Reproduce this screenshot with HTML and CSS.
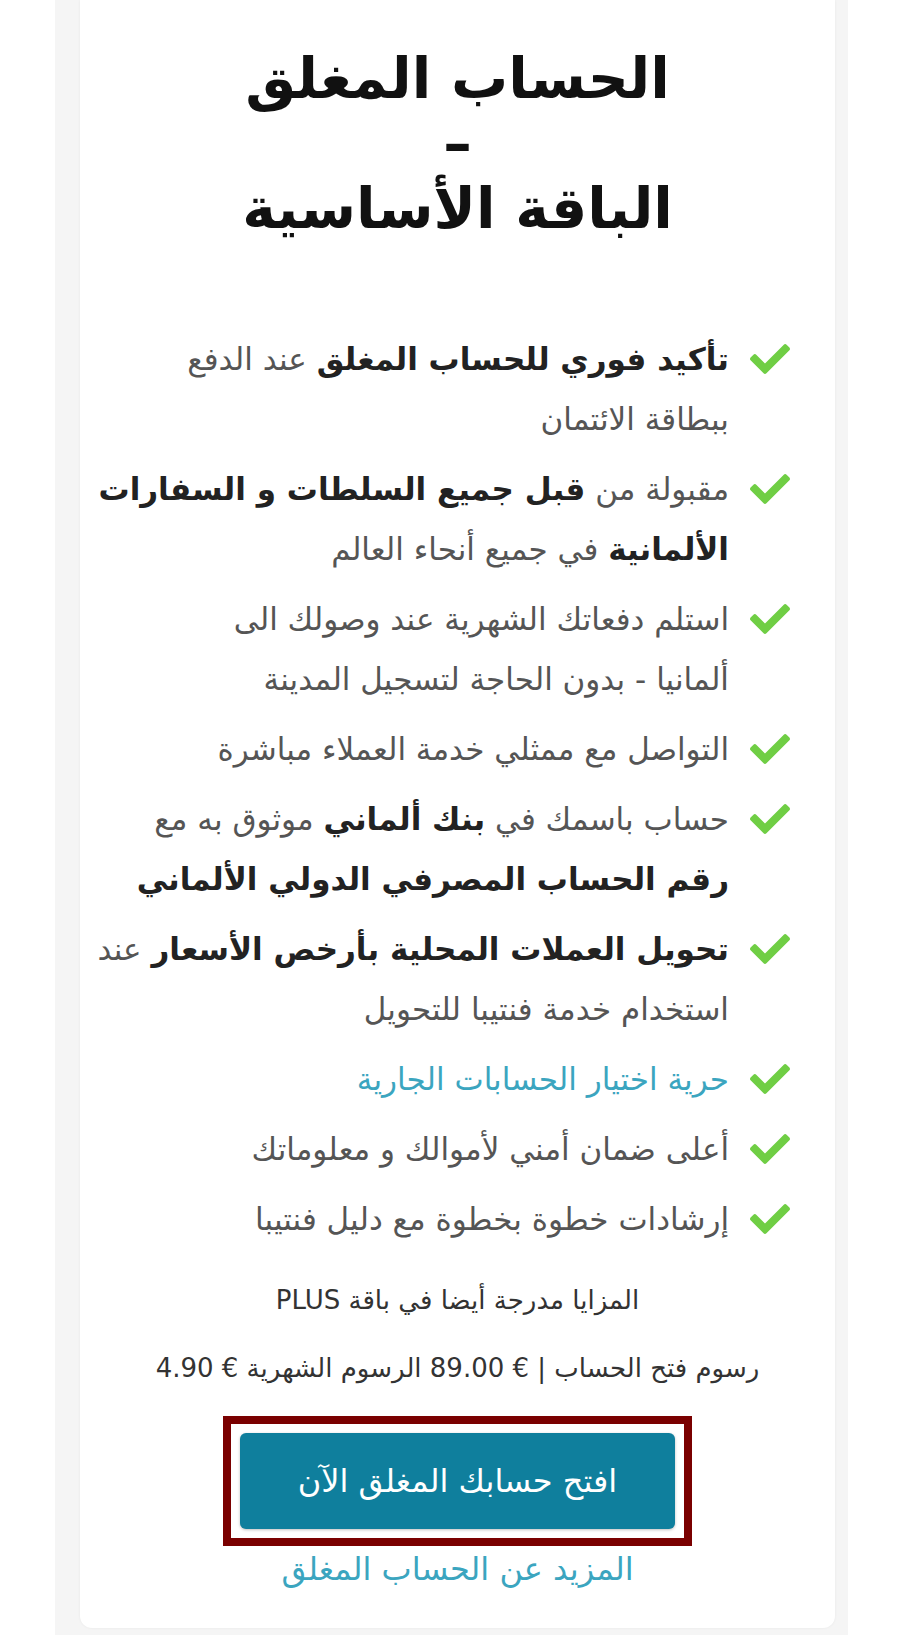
FILE: index.html
```html
<!DOCTYPE html>
<html lang="ar" dir="rtl">
<head>
    <meta charset="UTF-8">
    <meta name="viewport" content="width=device-width, initial-scale=1.0">
    <title>الحساب المغلق - الباقة الأساسية</title>
    <link rel="stylesheet" href="styles.css">
</head>
<body>
    <div class="paket-wrap">
        <div class="paket-card">
            <h1 class="paket-title">الحساب المغلق<br>–<br>الباقة الأساسية</h1>

            <ul class="fitur">
                <li>
                    <svg class="cek" viewBox="0 0 512 512"><path d="M173.9 439.4l-166.4-166.4c-10-10-10-26.2 0-36.2l36.2-36.2c10-10 26.2-10 36.2 0L192 312.7 432.1 72.6c10-10 26.2-10 36.2 0l36.2 36.2c10 10 10 26.2 0 36.2l-294.4 294.4c-10 10-26.2 10-36.2 0z"/></svg>
                    <span><b>تأكيد فوري للحساب المغلق</b> عند الدفع<br>ببطاقة الائتمان</span>
                </li>
                <li>
                    <svg class="cek" viewBox="0 0 512 512"><path d="M173.9 439.4l-166.4-166.4c-10-10-10-26.2 0-36.2l36.2-36.2c10-10 26.2-10 36.2 0L192 312.7 432.1 72.6c10-10 26.2-10 36.2 0l36.2 36.2c10 10 10 26.2 0 36.2l-294.4 294.4c-10 10-26.2 10-36.2 0z"/></svg>
                    <span>مقبولة من <b>قبل جميع السلطات و السفارات<br>الألمانية</b> في جميع أنحاء العالم</span>
                </li>
                <li>
                    <svg class="cek" viewBox="0 0 512 512"><path d="M173.9 439.4l-166.4-166.4c-10-10-10-26.2 0-36.2l36.2-36.2c10-10 26.2-10 36.2 0L192 312.7 432.1 72.6c10-10 26.2-10 36.2 0l36.2 36.2c10 10 10 26.2 0 36.2l-294.4 294.4c-10 10-26.2 10-36.2 0z"/></svg>
                    <span>استلم دفعاتك الشهرية عند وصولك الى<br>ألمانيا - بدون الحاجة لتسجيل المدينة</span>
                </li>
                <li>
                    <svg class="cek" viewBox="0 0 512 512"><path d="M173.9 439.4l-166.4-166.4c-10-10-10-26.2 0-36.2l36.2-36.2c10-10 26.2-10 36.2 0L192 312.7 432.1 72.6c10-10 26.2-10 36.2 0l36.2 36.2c10 10 10 26.2 0 36.2l-294.4 294.4c-10 10-26.2 10-36.2 0z"/></svg>
                    <span>التواصل مع ممثلي خدمة العملاء مباشرة</span>
                </li>
                <li>
                    <svg class="cek" viewBox="0 0 512 512"><path d="M173.9 439.4l-166.4-166.4c-10-10-10-26.2 0-36.2l36.2-36.2c10-10 26.2-10 36.2 0L192 312.7 432.1 72.6c10-10 26.2-10 36.2 0l36.2 36.2c10 10 10 26.2 0 36.2l-294.4 294.4c-10 10-26.2 10-36.2 0z"/></svg>
                    <span>حساب باسمك في <b>بنك ألماني</b> موثوق به مع<br><b>رقم الحساب المصرفي الدولي الألماني</b></span>
                </li>
                <li>
                    <svg class="cek" viewBox="0 0 512 512"><path d="M173.9 439.4l-166.4-166.4c-10-10-10-26.2 0-36.2l36.2-36.2c10-10 26.2-10 36.2 0L192 312.7 432.1 72.6c10-10 26.2-10 36.2 0l36.2 36.2c10 10 10 26.2 0 36.2l-294.4 294.4c-10 10-26.2 10-36.2 0z"/></svg>
                    <span><b>تحويل العملات المحلية بأرخص الأسعار</b> عند<br>استخدام خدمة فنتيبا للتحويل</span>
                </li>
                <li>
                    <svg class="cek" viewBox="0 0 512 512"><path d="M173.9 439.4l-166.4-166.4c-10-10-10-26.2 0-36.2l36.2-36.2c10-10 26.2-10 36.2 0L192 312.7 432.1 72.6c10-10 26.2-10 36.2 0l36.2 36.2c10 10 10 26.2 0 36.2l-294.4 294.4c-10 10-26.2 10-36.2 0z"/></svg>
                    <a href="#" class="link">حرية اختيار الحسابات الجارية</a>
                </li>
                <li>
                    <svg class="cek" viewBox="0 0 512 512"><path d="M173.9 439.4l-166.4-166.4c-10-10-10-26.2 0-36.2l36.2-36.2c10-10 26.2-10 36.2 0L192 312.7 432.1 72.6c10-10 26.2-10 36.2 0l36.2 36.2c10 10 10 26.2 0 36.2l-294.4 294.4c-10 10-26.2 10-36.2 0z"/></svg>
                    <span>أعلى ضمان أمني لأموالك و معلوماتك</span>
                </li>
                <li>
                    <svg class="cek" viewBox="0 0 512 512"><path d="M173.9 439.4l-166.4-166.4c-10-10-10-26.2 0-36.2l36.2-36.2c10-10 26.2-10 36.2 0L192 312.7 432.1 72.6c10-10 26.2-10 36.2 0l36.2 36.2c10 10 10 26.2 0 36.2l-294.4 294.4c-10 10-26.2 10-36.2 0z"/></svg>
                    <span>إرشادات خطوة بخطوة مع دليل فنتيبا</span>
                </li>
            </ul>

            <p class="catatan">المزايا مدرجة أيضا في باقة PLUS</p>
            <p class="harga">رسوم فتح الحساب | € 89.00 الرسوم الشهرية € 4.90</p>

            <div class="tombol-bingkai">
                <a href="#" class="tombol">افتح حسابك المغلق الآن</a>
            </div>
            <a href="#" class="link link-bawah">المزيد عن الحساب المغلق</a>
        </div>
    </div>
</body>
</html>
```

FILE: styles.css
```css
body {
    margin: 0;
    background: #fff;
    font-family: 'DejaVu Sans', 'Noto Sans', sans-serif;
    color: #555;
}
.paket-wrap {
    margin: 0 52px 0 55px;
    padding: 0 13px 7px 25px;
    background: #f5f5f5;
}
.paket-card {
    background: #fff;
    border-radius: 0 0 12px 12px;
    box-shadow: 0 0 3px rgba(0, 0, 0, 0.06);
    padding: 46px 0 39px;
    text-align: center;
}
.paket-title {
    margin: 0;
    color: #111;
    font-size: 57px;
    line-height: 65px;
    font-weight: bold;
}
.fitur {
    list-style: none;
    margin: 88px 0 0;
    padding: 0 45px 0 8px;
    text-align: right;
}
.fitur li {
    display: flex;
    align-items: flex-start;
    gap: 21px;
    font-size: 31px;
    line-height: 60px;
    margin-bottom: 10px;
}
.fitur li:last-child {
    margin-bottom: 0;
}
.fitur b {
    color: #222;
}
.cek {
    width: 40px;
    height: 40px;
    flex-shrink: 0;
    margin-top: 10px;
    fill: #6fce44;
}
.link {
    color: #3ba5bf;
    text-decoration: none;
}
.catatan {
    margin: 34px 0 0;
    font-size: 26px;
    line-height: 34px;
    color: #333;
}
.harga {
    margin: 34px 0 0;
    font-size: 26px;
    line-height: 34px;
    color: #333;
}
.tombol-bingkai {
    width: max-content;
    margin: 31px auto 0;
    border: 8px solid #7a0000;
    padding: 9px;
}
.tombol {
    display: block;
    width: 435px;
    padding: 28px 0;
    background: #0f7f9d;
    color: #fff;
    border-radius: 6px;
    font-size: 32px;
    line-height: 40px;
    text-decoration: none;
    box-shadow: 0 1px 3px rgba(0, 0, 0, 0.25);
}
.link-bawah {
    display: block;
    margin-top: 3px;
    font-size: 32px;
    line-height: 40px;
}
```
